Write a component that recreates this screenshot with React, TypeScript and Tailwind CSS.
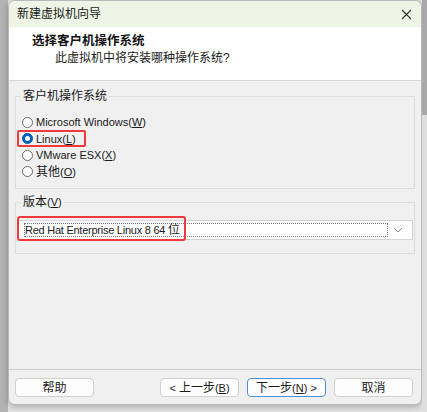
const FONT = "font-['Liberation_Sans','Noto_Sans_CJK_SC',sans-serif]";

function Radio({ label, keyChar, checked }: { label: React.ReactNode; keyChar: string; checked?: boolean }) {
  return (
    <div className="flex h-[16.5px] items-center gap-[3px]">
      <span
        className={`grid h-[11px] w-[11px] place-items-center rounded-full border ${
          checked ? "border-[#005fb8] bg-[#005fb8]" : "border-[#6b6b6b] bg-white"
        }`}
      >
        {checked && <span className="h-[5px] w-[5px] rounded-full bg-white" />}
      </span>
      <span className="text-[12px] text-[#1a1a1a]">
        {label}
        <span className="text-[11px]">
          (<span className="underline">{keyChar}</span>)
        </span>
      </span>
    </div>
  );
}

function Btn({ children, primary }: { children: React.ReactNode; primary?: boolean }) {
  return (
    <button
      className={`h-[19px] w-[79px] rounded-[4px] border bg-[#fdfdfd] text-[12px] leading-none text-[#1a1a1a] ${
        primary ? "border-[#4c8fd6]" : "border-[#d0d0d0]"
      }`}
    >
      {children}
    </button>
  );
}

export default function App() {
  return (
    <div className={`flex h-[412px] w-[427px] overflow-hidden bg-[#e3e3e3] ${FONT}`}>
      {/* desktop behind */}
      <div className="w-[8px] shrink-0 bg-[#b3b3b3]" />

      {/* wizard window */}
      <div className="flex h-[405px] w-[414px] shrink-0 flex-col overflow-hidden rounded-[7px] border border-[#b9b9b9] bg-[#f0f0f0] shadow-[0_2px_6px_rgba(0,0,0,0.25)]">
        {/* title bar */}
        <div className="flex h-[26px] shrink-0 items-center justify-between bg-[#eef5e6] pl-[8px] pr-[9px]">
          <span className="text-[12px] text-[#1a1a1a]">新建虚拟机向导</span>
          <svg width="11" height="11" viewBox="0 0 11 11" className="text-[#333]">
            <path d="M1 1L10 10M10 1L1 10" stroke="currentColor" strokeWidth="1.1" />
          </svg>
        </div>

        {/* header */}
        <div className="flex h-[54px] shrink-0 flex-col border-b border-[#d5d5d5] bg-white pl-[23px] pt-[6px]">
          <span className="text-[12.5px] font-bold leading-[17px] text-[#111]">选择客户机操作系统</span>
          <span className="pl-[23px] text-[12px] leading-[17px] text-[#1a1a1a]">此虚拟机中将安装哪种操作系统?</span>
        </div>

        {/* body */}
        <div className="flex flex-1 flex-col px-[6px] pt-[15px]">
          {/* guest OS group */}
          <div className="relative h-[93px] border border-[#dcdcdc] pl-[6px] pt-[17px]">
            <span className="absolute -top-[10px] left-[5px] bg-[#f0f0f0] px-[2px] text-[12px] text-[#1a1a1a]">
              客户机操作系统
            </span>
            <Radio label={<span className="text-[11px]">Microsoft Windows</span>} keyChar="W" />
            <div className="relative">
              <Radio label={<span className="text-[11px]">Linux</span>} keyChar="L" checked />
              <div className="pointer-events-none absolute -left-[5px] -top-[1px] h-[17px] w-[69px] rounded-[2px] border-2 border-[#f03a3a]" />
            </div>
            <Radio label={<span className="text-[11px]">VMware ESX</span>} keyChar="X" />
            <Radio label="其他" keyChar="O" />
          </div>

          {/* version group */}
          <div className="relative mt-[13px] h-[52px] border border-[#dcdcdc] px-[1px] pt-[17px]">
            <span className="absolute -top-[10px] left-[5px] bg-[#f0f0f0] px-[2px] text-[12px] text-[#1a1a1a]">
              版本<span className="text-[11px]">(<span className="underline">V</span>)</span>
            </span>
            <div className="relative flex h-[20px] items-center border border-[#d4d4d4] bg-white pl-[6px] pr-[6px]">
              <div className="flex h-[14px] flex-1 items-center border border-dotted border-[#777] text-[12px] text-[#1a1a1a]">
                <span className="text-[11px] tracking-[-0.25px]">Red Hat Enterprise Linux 8 64&nbsp;</span>位
              </div>
              <svg width="16" height="10" viewBox="0 0 16 10" className="ml-[2px] text-[#888]">
                <path d="M4 3L8 7L12 3" fill="none" stroke="currentColor" strokeWidth="1" />
              </svg>
              <div className="pointer-events-none absolute -left-[1px] -top-[5px] h-[25px] w-[169px] rounded-[3px] border-2 border-[#f03a3a]" />
            </div>
          </div>

          <div className="flex-1" />
        </div>

        {/* footer */}
        <div className="flex h-[35px] shrink-0 items-start border-t border-[#cfcfcf] pl-[6px] pr-[8px] pt-[8px]">
          <Btn>帮助</Btn>
          <div className="flex-1" />
          <div className="flex gap-[8px]">
            <Btn>
              <span className="text-[11px]">&lt; </span>上一步<span className="text-[11px]">(<span className="underline">B</span>)</span>
            </Btn>
            <Btn primary>
              下一步<span className="text-[11px]">(<span className="underline">N</span>) &gt;</span>
            </Btn>
            <Btn>取消</Btn>
          </div>
        </div>
      </div>

      {/* right edge of desktop */}
      <div className="flex flex-1 flex-col">
        <div className="h-[115px] bg-[#a9a9a9]" />
        <div className="flex-1 bg-[#dedede]" />
      </div>
    </div>
  );
}
